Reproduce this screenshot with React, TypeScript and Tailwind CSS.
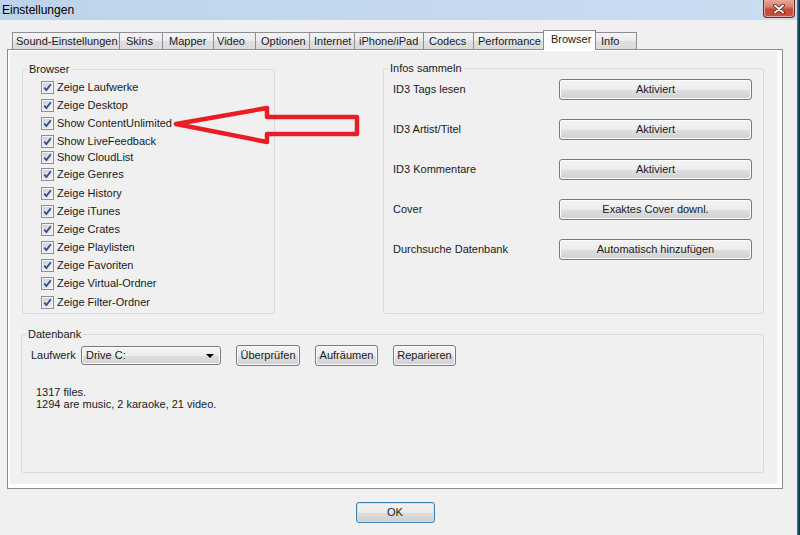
import React from "react";

type Tab = { label: string; w: string; pl: string; active?: boolean };

const tabs: Tab[] = [
  { label: "Sound-Einstellungen", w: "w-[108px]", pl: "pl-[3px]" },
  { label: "Skins", w: "w-[44px]", pl: "pl-[6px]" },
  { label: "Mapper", w: "w-[52px]", pl: "pl-[6px]" },
  { label: "Video", w: "w-[43px]", pl: "pl-[3px]" },
  { label: "Optionen", w: "w-[55px]", pl: "pl-[5px]" },
  { label: "Internet", w: "w-[46px]", pl: "pl-[4px]" },
  { label: "iPhone/iPad", w: "w-[70px]", pl: "pl-[4px]" },
  { label: "Codecs", w: "w-[51px]", pl: "pl-[5px]" },
  { label: "Performance", w: "w-[71px]", pl: "pl-[4px]" },
  { label: "Browser", w: "w-[53px]", pl: "pl-[7px]", active: true },
  { label: "Info", w: "w-[42px]", pl: "pl-[5px]" },
];

// row offsets are a bit uneven in the original dialog
const browserItems = [
  { label: "Zeige Laufwerke", mt: "" },
  { label: "Zeige Desktop", mt: "" },
  { label: "Show ContentUnlimited", mt: "" },
  { label: "Show LiveFeedback", mt: "" },
  { label: "Show CloudList", mt: "-mt-[2px]" },
  { label: "Zeige Genres", mt: "-mt-[1px]" },
  { label: "Zeige History", mt: "mt-[1px]" },
  { label: "Zeige iTunes", mt: "" },
  { label: "Zeige Crates", mt: "" },
  { label: "Zeige Playlisten", mt: "" },
  { label: "Zeige Favoriten", mt: "" },
  { label: "Zeige Virtual-Ordner", mt: "" },
  { label: "Zeige Filter-Ordner", mt: "mt-[1px]" },
];

const infoRows = [
  { label: "ID3 Tags lesen", value: "Aktiviert" },
  { label: "ID3 Artist/Titel", value: "Aktiviert" },
  { label: "ID3 Kommentare", value: "Aktiviert" },
  { label: "Cover", value: "Exaktes Cover downl." },
  { label: "Durchsuche Datenbank", value: "Automatisch hinzufügen" },
];

const btnLook =
  "rounded-[3px] border border-[#7a7a7a] bg-[linear-gradient(#f4f4f4_0%,#ececec_50%,#dedede_51%,#d2d2d2_100%)] shadow-[inset_0_0_0_1px_#fbfbfb] text-[#1a1a1a]";

function WinButton({ children, className = "" }: { children: React.ReactNode; className?: string }) {
  return (
    <button type="button" className={`flex items-center justify-center leading-none ${btnLook} ${className}`}>
      {children}
    </button>
  );
}

function CheckBox() {
  return (
    <svg width="13" height="13" viewBox="0 0 13 13" className="shrink-0">
      <defs>
        <linearGradient id="cbfill" x1="0" y1="0" x2="1" y2="1">
          <stop offset="0" stopColor="#cdd0d4" />
          <stop offset="1" stopColor="#f2f2f2" />
        </linearGradient>
      </defs>
      <rect x="0.5" y="0.5" width="12" height="12" fill="#f4f4f4" stroke="#8e8f8f" />
      <rect x="2" y="2" width="9" height="9" fill="url(#cbfill)" />
      <path d="M3.3 6.6 L5.4 9.1 L9.8 3.2" fill="none" stroke="#2f4f92" strokeWidth="1.8" />
    </svg>
  );
}

function CloseButton() {
  return (
    <div className="mr-[2px] flex h-[18px] w-[32px] items-center justify-center rounded-b-[4px] border border-t-0 border-[#6b2a22] bg-[linear-gradient(#e7a899_0%,#d9806f_40%,#c5493a_55%,#c9523f_100%)] shadow-[inset_0_0_0_1px_#e9a696]">
      <svg width="12" height="10" viewBox="0 0 12 10">
        <path d="M2 1.5 L10 8.5 M10 1.5 L2 8.5" stroke="#4a1c16" strokeWidth="3.6" strokeLinecap="round" />
        <path d="M2 1.5 L10 8.5 M10 1.5 L2 8.5" stroke="#ffffff" strokeWidth="2" strokeLinecap="round" />
      </svg>
    </div>
  );
}

export default function App() {
  return (
    <div
      className="relative flex h-[535px] w-[800px] overflow-hidden bg-[#f0f0f0] text-[11px] text-[#1a1a1a]"
      style={{ fontFamily: '"Liberation Sans", Arial, sans-serif' }}
    >
      <div className="flex w-[797px] flex-col">
        {/* title bar */}
        <div className="flex h-[20px] items-start justify-between bg-[linear-gradient(to_right,#bed3eb,#cadcf0)]">
          <span className="pl-[2px] pt-[3px] text-[12px] leading-[14px] text-black">Einstellungen</span>
          <CloseButton />
        </div>

        {/* tabs */}
        <div className="relative z-10 mt-[10px] flex h-[20px] items-end pl-[12px]">
          {tabs.map((t, i) =>
            t.active ? (
              <div
                key={t.label}
                className={`-ml-px flex h-[20px] items-center border border-b-0 border-[#898c95] bg-white pb-[2px] ${t.w} ${t.pl}`}
              >
                {t.label}
              </div>
            ) : (
              <div
                key={t.label}
                className={`mb-px flex h-[17px] items-center border border-b-0 border-[#8c8e94] bg-[linear-gradient(#f4f4f4_0%,#ebebeb_50%,#e0e0e0_51%,#dadada_100%)] ${i > 0 ? "-ml-px" : ""} ${t.w} ${t.pl}`}
              >
                {t.label}
              </div>
            )
          )}
        </div>

        {/* tab page */}
        <div className="-mt-px ml-[7px] h-[440px] w-[776px] border border-[#898c95] bg-white pb-[4px] pl-[2px] pr-[5px] pt-[1px]">
          <div className="flex h-full flex-col bg-[#f0f0f0]">
            <div className="mt-[11px] flex items-start">
              <fieldset className="ml-[12px] mt-[1px] h-[251px] w-[253px] rounded-[3px] border border-[#d3dce3]">
                <legend className="ml-[4px] px-[2px] leading-[13px]">Browser</legend>
                <div className="flex flex-col pl-[18px] pt-[2px]">
                  {browserItems.map((it) => (
                    <div key={it.label} className={`flex h-[18px] items-center gap-[3px] ${it.mt}`}>
                      <CheckBox />
                      <span className="leading-[13px]">{it.label}</span>
                    </div>
                  ))}
                </div>
              </fieldset>

              <fieldset className="ml-[108px] h-[252px] w-[381px] rounded-[3px] border border-[#d3dce3]">
                <legend className="ml-[4px] px-[2px] leading-[13px]">Infos sammeln</legend>
                <div className="flex flex-col gap-[19px] pt-[4px]">
                  {infoRows.map((r) => (
                    <div key={r.label} className="flex h-[21px] items-center">
                      <span className="w-[175px] pl-[9px] leading-[13px]">{r.label}</span>
                      <WinButton className="h-[21px] w-[193px]">{r.value}</WinButton>
                    </div>
                  ))}
                </div>
              </fieldset>
            </div>

            <fieldset className="ml-[11px] mt-[14px] h-[145px] w-[743px] rounded-[3px] border border-[#d3dce3]">
              <legend className="ml-[4px] px-[2px] leading-[13px]">Datenbank</legend>
              <div className="mt-[4px] flex h-[21px] items-center pl-[9px]">
                <span className="w-[50px] leading-[13px]">Laufwerk</span>
                <div className={`flex h-[19px] w-[140px] items-center justify-between pl-[4px] pr-[6px] ${btnLook}`}>
                  <span className="leading-[13px]">Drive C:</span>
                  <svg width="8" height="4" viewBox="0 0 8 4">
                    <path d="M0 0 H8 L4 4 Z" fill="#000" />
                  </svg>
                </div>
                <WinButton className="ml-[15px] h-[21px] w-[64px]">Überprüfen</WinButton>
                <WinButton className="ml-[15px] h-[21px] w-[63px]">Aufräumen</WinButton>
                <WinButton className="ml-[15px] h-[21px] w-[63px]">Reparieren</WinButton>
              </div>
              <div className="mt-[20px] pl-[14px] leading-[12px]">
                <div>1317 files.</div>
                <div>1294 are music, 2 karaoke, 21 video.</div>
              </div>
            </fieldset>
          </div>
        </div>

        <div className="ml-[7px] mt-[13px] flex w-[776px] justify-center">
          <button
            type="button"
            className="flex h-[21px] w-[79px] items-center justify-center rounded-[3px] border border-[#3c7fb1] bg-[linear-gradient(#f2f2f2_0%,#eaeaea_50%,#dcdcdc_51%,#d0d0d0_100%)] leading-none shadow-[inset_0_0_0_1px_#c4e5f6]"
          >
            OK
          </button>
        </div>
      </div>

      {/* window frame edge */}
      <div className="w-[3px] bg-[linear-gradient(to_right,#2c86b8,#0c2230)]" />

      {/* red annotation arrow drawn over the dialog */}
      <svg className="pointer-events-none absolute left-0 top-0" width="800" height="535" viewBox="0 0 800 535">
        <polygon
          points="176,124 267,108 267,117 357,117 357,134 267,134 267,142"
          fill="none"
          stroke="#ec1c24"
          strokeWidth="4.5"
          strokeLinejoin="round"
        />
      </svg>
    </div>
  );
}
